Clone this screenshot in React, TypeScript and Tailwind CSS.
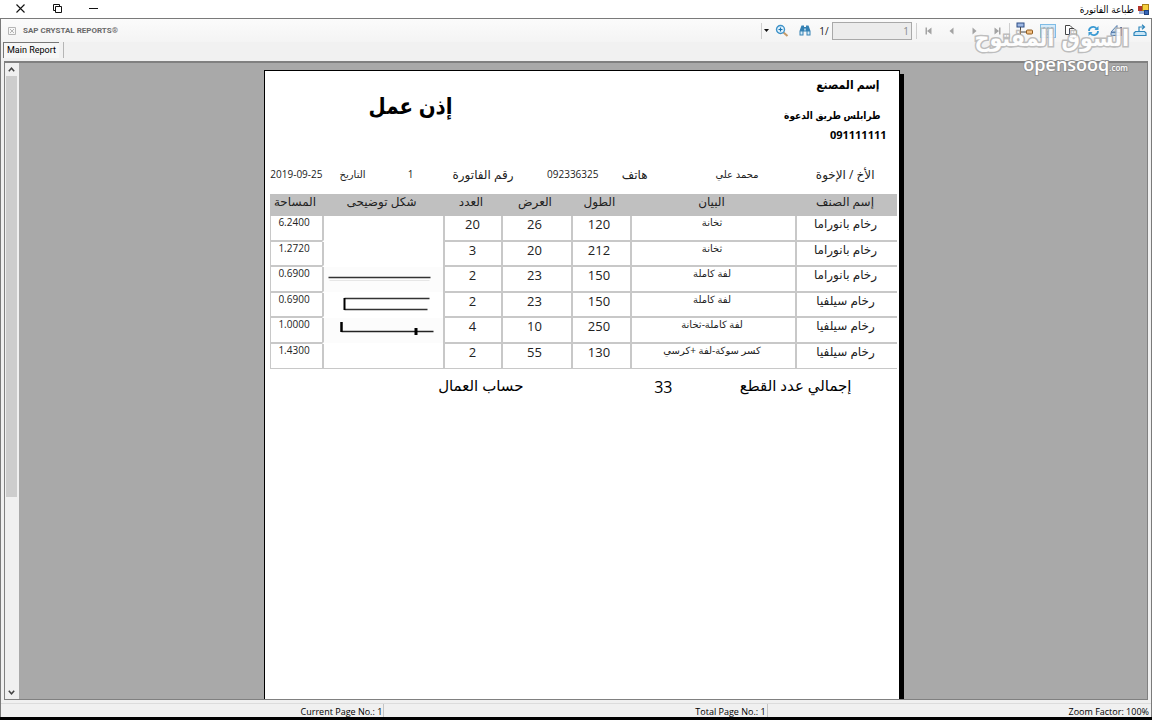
import type { ReactNode } from "react";

type Row = {
  name: string;
  note: string;
  length: string;
  width: string;
  count: string;
  area: string;
  shape?: ReactNode;
};

const lineShape = (
  <svg viewBox="0 0 118 25" className="block h-[25px] w-full bg-[#fcfcfc]">
    <path d="M4 10.5H106" stroke="#333" strokeWidth="1.5" />
    <path d="M5 13.5H105" stroke="#e6e6e6" strokeWidth="1" />
  </svg>
);

const channelShape = (
  <svg viewBox="0 0 118 25" className="block h-[25px] w-full">
    <path d="M20 5.5H105M20 16.5H103" stroke="#333" strokeWidth="1.3" />
    <path d="M20 5V17" stroke="#000" strokeWidth="2" />
  </svg>
);

const hookShape = (
  <svg viewBox="0 0 118 25" className="block h-[25px] w-full bg-[#fcfcfc]">
    <path d="M17 13.5H109" stroke="#222" strokeWidth="1.3" />
    <path d="M17 4V14" stroke="#000" strokeWidth="2.5" />
    <path d="M91.500 10V17" stroke="#000" strokeWidth="3" />
  </svg>
);

const rows: Row[] = [
  { name: "رخام بانوراما", note: "ثخانة", length: "120", width: "26", count: "20", area: "6.2400" },
  { name: "رخام بانوراما", note: "ثخانة", length: "212", width: "20", count: "3", area: "1.2720" },
  { name: "رخام بانوراما", note: "لفة كاملة", length: "150", width: "23", count: "2", area: "0.6900", shape: lineShape },
  { name: "رخام سيلفيا", note: "لفة كاملة", length: "150", width: "23", count: "2", area: "0.6900", shape: channelShape },
  { name: "رخام سيلفيا", note: "لفة كاملة-ثخانة", length: "250", width: "10", count: "4", area: "1.0000", shape: hookShape },
  { name: "رخام سيلفيا", note: "كسر سوكة-لفة +كرسي", length: "130", width: "55", count: "2", area: "1.4300" },
];

const headings = ["إسم الصنف", "البيان", "الطول", "العرض", "العدد", "شكل توضيحى", "المساحة"];

function ToolButton({ label, children }: { label: string; children: ReactNode }) {
  return (
    <button type="button" aria-label={label} className="flex h-5 w-[23px] items-center justify-center">
      {children}
    </button>
  );
}

function TitleBar() {
  return (
    <header className="flex h-[18px] shrink-0 items-center justify-between bg-white">
      <div className="flex items-center pb-[2px] pl-[2px]">
        <button type="button" aria-label="إغلاق" className="flex h-4 w-9 items-center justify-center">
          <svg width="9" height="9" viewBox="0 0 9 9"><path d="M.5 .5L8.500 8.500M8.500 .5L.5 8.500" stroke="#111" strokeWidth="1.1" /></svg>
        </button>
        <button type="button" aria-label="استعادة" className="flex h-4 w-[38px] items-center justify-center">
          <svg width="9" height="9" viewBox="0 0 9 9" fill="none" stroke="#111"><path d="M2.500 2.500H8.500V8.500H2.500ZM2.500 6.500H.5V.5H6.500V2.500" /></svg>
        </button>
        <button type="button" aria-label="تصغير" className="flex h-4 w-[34px] items-center justify-center">
          <svg width="9" height="9" viewBox="0 0 9 9"><path d="M0 4.500H9" stroke="#111" /></svg>
        </button>
      </div>
      <div className="flex items-center gap-1 pr-[3px]">
        <h1 dir="rtl" className="font-['Open_Sans','DejaVu_Sans_Condensed','DejaVu_Sans',sans-serif] text-[10px] leading-4 text-black">طباعة الفاتورة</h1>
        <svg width="11" height="11" viewBox="0 0 11 11">
          <rect x="0" y="2" width="5" height="5" fill="#b4352b" />
          <rect x="4.500" y="0.500" width="6" height="6" fill="#f6cf3f" stroke="#a98217" />
          <rect x="1" y="7" width="5" height="3" fill="#9fb4dd" />
          <rect x="6.500" y="6.500" width="4" height="4" fill="#3565b8" stroke="#20427f" />
        </svg>
      </div>
    </header>
  );
}

function Toolbar() {
  return (
    <div className="flex h-[23px] shrink-0 items-center justify-between bg-linear-to-b from-[#fbfbfb] to-[#f4f4f4]">
      <div className="flex items-center gap-[7px] pl-[7px]">
        <button type="button" aria-label="إغلاق العرض">
          <svg width="8" height="8" viewBox="0 0 8 8" fill="none" stroke="#b5b5b5"><path d="M.5 .5H7.500V7.500H.5ZM2 2L6 6M6 2L2 6" /></svg>
        </button>
        <span className="font-['Roboto',sans-serif] text-[8px] leading-4 font-bold text-[#6a6a6a]">SAP CRYSTAL REPORTS®</span>
      </div>
      <div className="flex items-center">
        <span className="h-4 w-px bg-[#cfcfcf]" />
        <button type="button" aria-label="خيارات التكبير" className="flex h-5 w-2 items-center justify-center">
          <svg width="5" height="3" viewBox="0 0 5 3"><path d="M0 0H5L2.500 3Z" fill="#111" /></svg>
        </button>
        <ToolButton label="تكبير">
          <svg width="14" height="14" viewBox="0 0 14 14" fill="none">
            <path d="M8.500 8.500L12.500 12" stroke="#c59a68" strokeWidth="2" />
            <circle cx="5.500" cy="5.500" r="4" fill="#e3f3fd" stroke="#3f93c9" strokeWidth="1.4" />
            <path d="M3.500 5.500H7.500M5.500 3.500V7.500" stroke="#1672b0" strokeWidth="1.2" />
          </svg>
        </ToolButton>
        <ToolButton label="بحث">
          <svg width="12" height="11" viewBox="0 0 12 11">
            <path d="M2.500 .5H5V2H7V.5H9.500L11.500 6V10.500H7.500V6.500H4.500V10.500H.5V6Z" fill="#3581b3" />
            <path d="M1.500 6.500H3.500V9.500H1.500ZM8.500 6.500H10.500V9.500H8.500ZM5.300 3.500H6.700V5.500H5.300Z" fill="#d5ebf8" />
          </svg>
        </ToolButton>
        <label htmlFor="page-number" className="w-4 text-center text-[10px] leading-4 text-[#222]">1/</label>
        <input
          id="page-number"
          defaultValue="1"
          className="h-[18px] w-20 border border-[#a9a9a9] bg-[#ececec] px-[2px] text-right text-[10px] leading-4 text-[#8a8a8a]"
        />
        <span className="ml-1 h-4 w-px bg-[#cfcfcf]" />
        <ToolButton label="الصفحة الأولى">
          <svg width="7" height="8" viewBox="0 0 7 8"><path d="M.5 .5H2V7.500H.5ZM6.500 .5V7.500L2 4Z" fill="#a3a3a3" /></svg>
        </ToolButton>
        <ToolButton label="الصفحة السابقة">
          <svg width="5" height="8" viewBox="0 0 5 8"><path d="M4.500 .5V7.500L.5 4Z" fill="#a3a3a3" /></svg>
        </ToolButton>
        <ToolButton label="الصفحة التالية">
          <svg width="5" height="8" viewBox="0 0 5 8"><path d="M.5 .5V7.500L4.500 4Z" fill="#a3a3a3" /></svg>
        </ToolButton>
        <ToolButton label="الصفحة الأخيرة">
          <svg width="7" height="8" viewBox="0 0 7 8"><path d="M6.500 .5H5V7.500H6.500ZM.5 .5V7.500L5 4Z" fill="#a3a3a3" /></svg>
        </ToolButton>
        <span className="mr-[3px] h-4 w-px bg-[#cfcfcf]" />
        <ToolButton label="شجرة المجموعات">
          <svg width="18" height="18" viewBox="0 0 18 18" fill="none">
            <rect x="1" y="1" width="7" height="4" fill="#9db7e3" stroke="#2f4f86" />
            <path d="M4.500 5V13M4.500 10H10" stroke="#444" />
            <rect x="10.500" y="8" width="6" height="4" rx="1" fill="#f2c083" stroke="#8f5a1c" />
          </svg>
        </ToolButton>
        <ToolButton label="لوحة المعلمات">
          <svg width="16" height="14" viewBox="0 0 16 14" fill="none" stroke="#2e8fd0">
            <rect x=".5" y=".5" width="15" height="13" fill="#d5ebfa" stroke="#7fbce6" />
            <path d="M4.500 3C2.500 5 2.500 9 4.500 11M11.500 3C13.500 5 13.500 9 11.500 11M6.500 5.500C6.500 3.500 9.500 3.500 9.500 5.500C9.500 7 8 6.500 8 8.500M8 9.500V11" />
          </svg>
        </ToolButton>
        <ToolButton label="نسخ">
          <svg width="14" height="14" viewBox="0 0 14 14" fill="#fff" stroke="#444">
            <path d="M1.500 1.500H6L8.500 4V10.500H1.500Z" />
            <path d="M5.500 4.500H10L12.500 7V13.500H5.500Z" />
          </svg>
        </ToolButton>
        <ToolButton label="تحديث">
          <svg width="13" height="12" viewBox="0 0 13 12" fill="none" stroke="#3a9ad3" strokeWidth="1.800">
            <path d="M2 6C2 2 7 .5 9.500 3.500M11 6C11 10 6 11.500 3.500 8.500" />
            <path d="M11.500 1V5H7.500ZM1.500 11V7H5.500Z" fill="#3a9ad3" stroke="none" />
          </svg>
        </ToolButton>
        <ToolButton label="طباعة">
          <svg width="14" height="13" viewBox="0 0 14 13" fill="none" stroke="#5a7fae">
            <path d="M1 8L7 1.500V8Z" fill="#c9def2" />
            <path d="M1 8.500H10V11.500H1Z" fill="#b9d4ee" />
            <path d="M11 3V12" stroke="#294f91" strokeWidth="2" />
          </svg>
        </ToolButton>
        <ToolButton label="تصدير">
          <svg width="14" height="13" viewBox="0 0 14 13" fill="none" stroke="#2e86bb" strokeWidth="1.200">
            <path d="M2.500 7.500H11.500L13 9V11.500H1V9Z" fill="#c9e6f7" />
            <path d="M6 8V3H11M9 .8L11.500 3L9 5.200" />
          </svg>
        </ToolButton>
      </div>
    </div>
  );
}

function Watermark() {
  return (
    <div className="pointer-events-none absolute top-[3px] right-[22px] flex flex-col items-end text-white">
      <span dir="rtl" className="font-['DejaVu_Sans_Condensed','DejaVu_Sans',sans-serif] text-[23px] leading-8 font-bold whitespace-nowrap opacity-90 [-webkit-text-stroke:3px_#b8b8b8] [paint-order:stroke_fill]">
        السوق المفتوح
      </span>
      <span className="pr-px font-['Open_Sans',sans-serif] text-[18px] leading-5 font-semibold [-webkit-text-stroke:2px_#929292] [paint-order:stroke_fill]">
        opensooq<span className="text-[8px]">.com</span>
      </span>
    </div>
  );
}

function Report() {
  return (
    <article dir="rtl" className="relative w-[636px] border border-b-0 border-black bg-white pr-[2px] pl-[5px] text-[#222] shadow-[4px_4px_0_0_#000]">
      <div className="flex justify-between pt-1 font-['Open_Sans','DejaVu_Sans_Condensed','DejaVu_Sans',sans-serif] font-bold text-black">
        <div className="pr-[10px]">
          <p className="pr-[7px] text-[12px] leading-5">إسم المصنع</p>
          <p className="mt-[10px] pr-[6px] text-[10px] leading-5">طرابلس طريق الدعوة</p>
          <p className="text-[11px] leading-5">091111111</p>
        </div>
        <h2 className="pt-3 pl-[99px] text-[22px] leading-9">إذن عمل</h2>
      </div>
      <div className="mt-[19px] flex h-[30px] pr-[22px] text-[10px] leading-5 whitespace-nowrap">
        <span className="w-[116px] text-[12px] leading-[22px]">الأخ / الإخوة</span>
        <span className="w-[111px]">محمد علي</span>
        <span className="w-[49px] text-[12px] leading-[22px]">هاتف</span>
        <span className="w-[85px]">092336325</span>
        <span className="w-[100px] text-[12px] leading-[22px]">رقم الفاتورة</span>
        <span className="w-12">1</span>
        <span className="w-[43px]">التاريخ</span>
        <span>2019-09-25</span>
      </div>
      <table className="w-full table-fixed border-separate border-spacing-0 text-center">
        <colgroup>
          <col className="w-[102px]" />
          <col className="w-[165px]" />
          <col className="w-[59px]" />
          <col className="w-[70px]" />
          <col className="w-[58px]" />
          <col className="w-[121px]" />
          <col />
        </colgroup>
        <thead>
          <tr className="h-[22px] bg-[#c0c0c0]">
            {headings.map((h) => (
              <th key={h} scope="col" className="p-0 pr-px align-top text-[12px] leading-4 font-normal whitespace-nowrap">{h}</th>
            ))}
          </tr>
        </thead>
        <tbody>
          {rows.map((r, i) => (
            <tr key={i} className="h-[25px] odd:h-[26px] [&>td]:border-b-2 [&>td]:border-l-2 [&>td]:border-[#c8c8c8] [&>td]:p-0 [&>td]:align-top [&>td:last-child]:border-l [&:last-child>td]:border-b">
              <td className="text-[12px] leading-4"><div className="pr-[2px]">{r.name}</div></td>
              <td className="text-[10px] leading-3"><div className="pr-[2px]">{r.note}</div></td>
              <td className="text-[13px] leading-4"><div className="pr-1">{r.length}</div></td>
              <td className="text-[13px] leading-4"><div className="pr-1">{r.width}</div></td>
              <td className="text-[13px] leading-4">{r.count}</td>
              <td className={i < 5 ? "border-b-white!" : ""}><div className="h-0">{r.shape}</div></td>
              <td className="text-[10px] leading-3"><div className="pr-1">{r.area}</div></td>
            </tr>
          ))}
        </tbody>
      </table>
      <div className="flex pt-1 pr-[45px] text-[15px] leading-6 text-black">
        <span className="w-[179px]">إجمالي عدد القطع</span>
        <span className="w-[149px] text-[16px] leading-7">33</span>
        <span>حساب العمال</span>
      </div>
    </article>
  );
}

export default function App() {
  return (
    <div className="flex h-screen flex-col overflow-hidden border-b-[3px] border-black bg-[#f0f0f0] font-['Open_Sans','DejaVu_Sans',sans-serif]">
      <TitleBar />
      <div className="relative flex min-h-0 flex-1 flex-col border-x border-t border-[#7a7a7a]">
        <Toolbar />
        <nav className="flex h-[19px] shrink-0 items-start bg-[#f1f1f1] pl-[2px]">
          <button type="button" className="h-4 border-t border-l border-[#777] bg-[#f6f6f6] px-[3px] font-['Roboto',sans-serif] text-[9px] leading-[15px] text-black">Main Report</button>
          <span className="ml-1 h-4 w-px bg-[#b5b5b5]" />
        </nav>
        <main className="mr-[3px] ml-[3px] flex min-h-0 flex-1 border border-t-2 border-[#808080] bg-[#a9a9a9]">
          <div className="flex w-[14px] shrink-0 flex-col bg-[#f0f0f0] pr-[2px] pl-px">
            <button type="button" aria-label="لأعلى" className="flex h-[13px] items-center justify-center">
              <svg width="7" height="5" viewBox="0 0 7 5"><path d="M.8 4.200L3.500 1.200L6.200 4.200" fill="none" stroke="#444" strokeWidth="1.500" /></svg>
            </button>
            <div className="flex flex-1 flex-col">
              <div className="h-[69%] bg-[#cdcdcd]" />
            </div>
            <button type="button" aria-label="لأسفل" className="flex h-[13px] items-center justify-center">
              <svg width="7" height="5" viewBox="0 0 7 5"><path d="M.8 .8L3.500 3.800L6.200 .8" fill="none" stroke="#444" strokeWidth="1.500" /></svg>
            </button>
          </div>
          <div className="flex min-w-0 flex-1 justify-center overflow-hidden pt-[7px] pr-[3px]">
            <Report />
          </div>
        </main>
        <Watermark />
        <footer className="mt-[3px] grid h-[14px] shrink-0 grid-cols-3 border-t border-[#dcdcdc] text-right text-[9px] leading-[15px] text-black">
          <span className="border-r border-[#c4c4c4] pr-px">Current Page No.: 1</span>
          <span className="border-r border-[#c4c4c4] pr-px">Total Page No.: 1</span>
          <span className="pr-[2px]">Zoom Factor: 100%</span>
        </footer>
      </div>
    </div>
  );
}
